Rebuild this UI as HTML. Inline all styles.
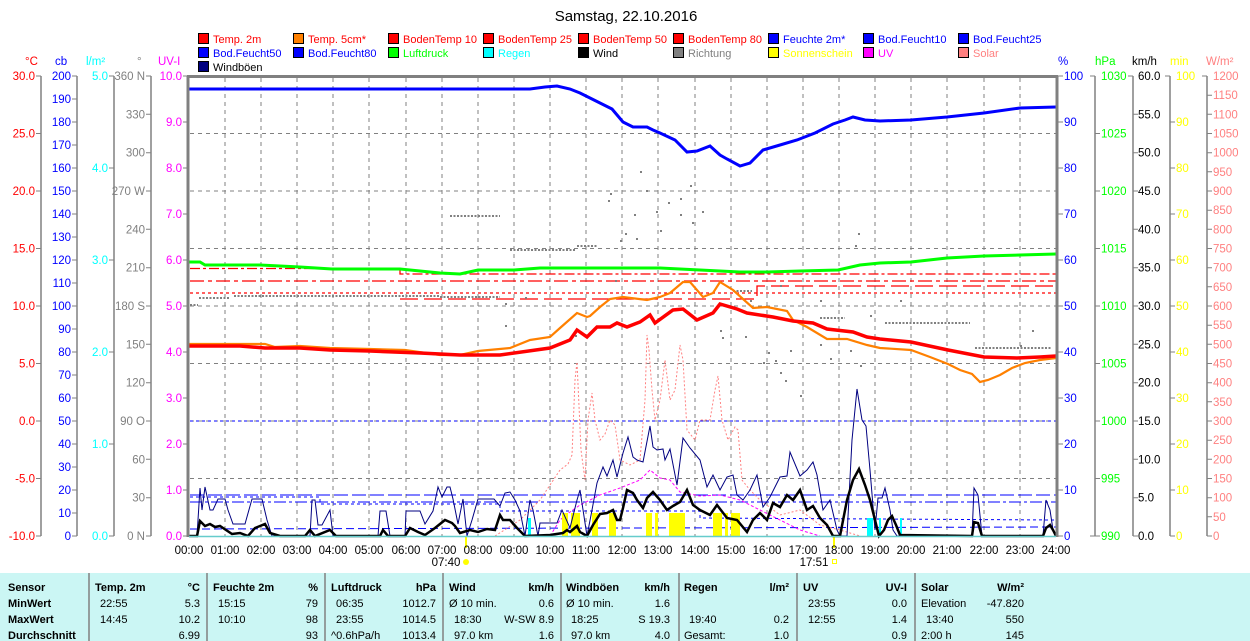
<!DOCTYPE html>
<html><head><meta charset="utf-8"><style>
html,body{margin:0;padding:0;background:#fff;}
body{width:1250px;height:641px;overflow:hidden;position:relative;font-family:"Liberation Sans",sans-serif;}
svg{position:absolute;left:0;top:0;}
</style></head><body>
<svg width="1250" height="641" xmlns="http://www.w3.org/2000/svg" font-family="Liberation Sans, sans-serif" font-size="11.5">
<text x="626" y="21" text-anchor="middle" font-size="15">Samstag, 22.10.2016</text>
<!-- legend -->
<g font-size="11">
<g stroke="#000" stroke-width="1">
<rect x="198.5" y="33.5" width="10" height="10" fill="#f00"/><rect x="293.5" y="33.5" width="10" height="10" fill="#ff8000"/><rect x="388.5" y="33.5" width="10" height="10" fill="#f00"/><rect x="483.5" y="33.5" width="10" height="10" fill="#f00"/><rect x="578.5" y="33.5" width="10" height="10" fill="#f00"/><rect x="673.5" y="33.5" width="10" height="10" fill="#f00"/><rect x="768.5" y="33.5" width="10" height="10" fill="#00f"/><rect x="863.5" y="33.5" width="10" height="10" fill="#00f"/><rect x="958.5" y="33.5" width="10" height="10" fill="#00f"/>
<rect x="198.5" y="47.5" width="10" height="10" fill="#00f"/><rect x="293.5" y="47.5" width="10" height="10" fill="#00f"/><rect x="388.5" y="47.5" width="10" height="10" fill="#0f0"/><rect x="483.5" y="47.5" width="10" height="10" fill="#0ff"/><rect x="578.5" y="47.5" width="10" height="10" fill="#000"/><rect x="673.5" y="47.5" width="10" height="10" fill="#808080"/><rect x="768.5" y="47.5" width="10" height="10" fill="#ff0"/><rect x="863.5" y="47.5" width="10" height="10" fill="#f0f"/><rect x="958.5" y="47.5" width="10" height="10" fill="#ff8080"/>
<rect x="198.5" y="61.5" width="10" height="10" fill="#000080"/>
</g>
<text x="213" y="43" fill="#f00">Temp. 2m</text><text x="308" y="43" fill="#f00">Temp. 5cm*</text><text x="403" y="43" fill="#f00">BodenTemp 10</text><text x="498" y="43" fill="#f00">BodenTemp 25</text><text x="593" y="43" fill="#f00">BodenTemp 50</text><text x="688" y="43" fill="#f00">BodenTemp 80</text><text x="783" y="43" fill="#00f">Feuchte 2m*</text><text x="878" y="43" fill="#00f">Bod.Feucht10</text><text x="973" y="43" fill="#00f">Bod.Feucht25</text>
<text x="213" y="57" fill="#00f">Bod.Feucht50</text><text x="308" y="57" fill="#00f">Bod.Feucht80</text><text x="403" y="57" fill="#0f0">Luftdruck</text><text x="498" y="57" fill="#0ff">Regen</text><text x="593" y="57" fill="#000">Wind</text><text x="688" y="57" fill="#808080">Richtung</text><text x="783" y="57" fill="#ff0">Sonnenschein</text><text x="878" y="57" fill="#f0f">UV</text><text x="973" y="57" fill="#ff8080">Solar</text>
<text x="213" y="71" fill="#000">Windböen</text>
</g>
<!-- axis headers -->
<text x="25" y="65" fill="#f00">°C</text><text x="55" y="65" fill="#00f">cb</text><text x="86" y="65" fill="#0ff">l/m²</text><text x="137" y="65" fill="#808080">°</text><text x="158" y="65" fill="#f0f">UV-I</text>
<text x="1058" y="65" fill="#00f">%</text><text x="1095" y="65" fill="#0f0">hPa</text><text x="1132" y="65" fill="#000">km/h</text><text x="1170" y="65" fill="#ff0">min</text><text x="1206" y="65" fill="#ff8080">W/m²</text>
<!-- axis lines -->
<g stroke="#808080" stroke-width="1.5">
<line x1="41" y1="76" x2="41" y2="536"/><line x1="77" y1="76" x2="77" y2="536"/><line x1="114" y1="76" x2="114" y2="536"/><line x1="151" y1="76" x2="151" y2="536"/>
<line x1="1095" y1="76" x2="1095" y2="536"/><line x1="1133" y1="76" x2="1133" y2="536"/><line x1="1170" y1="76" x2="1170" y2="536"/><line x1="1207" y1="76" x2="1207" y2="536"/>
</g>
<!-- grid -->
<g stroke="#808080" stroke-width="1" stroke-dasharray="4,4">
<line x1="225" y1="78" x2="225" y2="536"/><line x1="261" y1="78" x2="261" y2="536"/><line x1="297" y1="78" x2="297" y2="536"/><line x1="333" y1="78" x2="333" y2="536"/><line x1="369" y1="78" x2="369" y2="536"/><line x1="406" y1="78" x2="406" y2="536"/><line x1="442" y1="78" x2="442" y2="536"/><line x1="478" y1="78" x2="478" y2="536"/><line x1="514" y1="78" x2="514" y2="536"/><line x1="550" y1="78" x2="550" y2="536"/><line x1="586" y1="78" x2="586" y2="536"/><line x1="622" y1="78" x2="622" y2="536"/><line x1="658" y1="78" x2="658" y2="536"/><line x1="695" y1="78" x2="695" y2="536"/><line x1="731" y1="78" x2="731" y2="536"/><line x1="767" y1="78" x2="767" y2="536"/><line x1="803" y1="78" x2="803" y2="536"/><line x1="839" y1="78" x2="839" y2="536"/><line x1="875" y1="78" x2="875" y2="536"/><line x1="911" y1="78" x2="911" y2="536"/><line x1="947" y1="78" x2="947" y2="536"/><line x1="984" y1="78" x2="984" y2="536"/><line x1="1020" y1="78" x2="1020" y2="536"/>
<line x1="190" y1="133.5" x2="1056" y2="133.5"/><line x1="190" y1="191" x2="1056" y2="191"/><line x1="190" y1="248.5" x2="1056" y2="248.5"/><line x1="190" y1="306" x2="1056" y2="306"/><line x1="190" y1="363.5" x2="1056" y2="363.5"/><line x1="190" y1="421" x2="1056" y2="421"/><line x1="190" y1="478.5" x2="1056" y2="478.5"/>
</g>
<!-- ticks -->
<g stroke="#808080" stroke-width="1">
<path d="M36 76h5M36 133.5h5M36 191h5M36 248.5h5M36 306h5M36 363.5h5M36 421h5M36 478.5h5M36 536h5"/>
<path d="M72 76h5M72 99h5M72 122h5M72 145h5M72 168h5M72 191h5M72 214h5M72 237h5M72 260h5M72 283h5M72 306h5M72 329h5M72 352h5M72 375h5M72 398h5M72 421h5M72 444h5M72 467h5M72 490h5M72 513h5M72 536h5"/>
<path d="M109 76h5M109 168h5M109 260h5M109 352h5M109 444h5M109 536h5"/>
<path d="M146 76h5M146 114.3h5M146 152.7h5M146 191h5M146 229.3h5M146 267.7h5M146 306h5M146 344.3h5M146 382.7h5M146 421h5M146 459.3h5M146 497.7h5M146 536h5"/>
<path d="M183 76h5M183 122h5M183 168h5M183 214h5M183 260h5M183 306h5M183 352h5M183 398h5M183 444h5M183 490h5M183 536h5"/>
<path d="M1058 76h5M1058 122h5M1058 168h5M1058 214h5M1058 260h5M1058 306h5M1058 352h5M1058 398h5M1058 444h5M1058 490h5M1058 536h5"/>
<path d="M1090 76h5M1095 133.5h5M1095 191h5M1095 248.5h5M1095 306h5M1095 363.5h5M1095 421h5M1095 478.5h5M1095 536h5M1090 536h5"/>
<path d="M1128 76h5M1133 114.3h5M1133 152.7h5M1133 191h5M1133 229.3h5M1133 267.7h5M1133 306h5M1133 344.3h5M1133 382.7h5M1133 421h5M1133 459.3h5M1133 497.7h5M1133 536h5"/>
<path d="M1165 76h5M1170 122h5M1170 168h5M1170 214h5M1170 260h5M1170 306h5M1170 352h5M1170 398h5M1170 444h5M1170 490h5M1170 536h5"/>
<path d="M1202 76h5M1207 95.2h5M1207 114.3h5M1207 133.5h5M1207 152.7h5M1207 171.8h5M1207 191h5M1207 210.2h5M1207 229.3h5M1207 248.5h5M1207 267.7h5M1207 286.8h5M1207 306h5M1207 325.2h5M1207 344.3h5M1207 363.5h5M1207 382.7h5M1207 401.8h5M1207 421h5M1207 440.2h5M1207 459.3h5M1207 478.5h5M1207 497.7h5M1207 516.8h5M1207 536h5"/>
</g>
<!-- left labels -->
<g text-anchor="end" fill="#f00"><text x="35" y="80">30.0</text><text x="35" y="137.5">25.0</text><text x="35" y="195">20.0</text><text x="35" y="252.5">15.0</text><text x="35" y="310">10.0</text><text x="35" y="367.5">5.0</text><text x="35" y="425">0.0</text><text x="35" y="482.5">-5.0</text><text x="35" y="540">-10.0</text></g>
<g text-anchor="end" fill="#00f"><text x="71" y="80">200</text><text x="71" y="103">190</text><text x="71" y="126">180</text><text x="71" y="149">170</text><text x="71" y="172">160</text><text x="71" y="195">150</text><text x="71" y="218">140</text><text x="71" y="241">130</text><text x="71" y="264">120</text><text x="71" y="287">110</text><text x="71" y="310">100</text><text x="71" y="333">90</text><text x="71" y="356">80</text><text x="71" y="379">70</text><text x="71" y="402">60</text><text x="71" y="425">50</text><text x="71" y="448">40</text><text x="71" y="471">30</text><text x="71" y="494">20</text><text x="71" y="517">10</text><text x="71" y="540">0</text></g>
<g text-anchor="end" fill="#0ff"><text x="108" y="80">5.0</text><text x="108" y="172">4.0</text><text x="108" y="264">3.0</text><text x="108" y="356">2.0</text><text x="108" y="448">1.0</text><text x="108" y="540">0.0</text></g>
<g text-anchor="end" fill="#808080"><text x="145" y="80">360 N</text><text x="145" y="118.3">330</text><text x="145" y="156.7">300</text><text x="145" y="195">270 W</text><text x="145" y="233.3">240</text><text x="145" y="271.7">210</text><text x="145" y="310">180 S</text><text x="145" y="348.3">150</text><text x="145" y="386.7">120</text><text x="145" y="425">90  O</text><text x="145" y="463.3">60</text><text x="145" y="501.7">30</text><text x="145" y="540">0  N</text></g>
<g text-anchor="end" fill="#f0f"><text x="182" y="80">10.0</text><text x="182" y="126">9.0</text><text x="182" y="172">8.0</text><text x="182" y="218">7.0</text><text x="182" y="264">6.0</text><text x="182" y="310">5.0</text><text x="182" y="356">4.0</text><text x="182" y="402">3.0</text><text x="182" y="448">2.0</text><text x="182" y="494">1.0</text><text x="182" y="540">0.0</text></g>
<!-- right labels -->
<g fill="#00f"><text x="1064" y="80">100</text><text x="1064" y="126">90</text><text x="1064" y="172">80</text><text x="1064" y="218">70</text><text x="1064" y="264">60</text><text x="1064" y="310">50</text><text x="1064" y="356">40</text><text x="1064" y="402">30</text><text x="1064" y="448">20</text><text x="1064" y="494">10</text><text x="1064" y="540">0</text></g>
<g fill="#0f0"><text x="1101" y="80">1030</text><text x="1101" y="137.5">1025</text><text x="1101" y="195">1020</text><text x="1101" y="252.5">1015</text><text x="1101" y="310">1010</text><text x="1101" y="367.5">1005</text><text x="1101" y="425">1000</text><text x="1101" y="482.5">995</text><text x="1101" y="540">990</text></g>
<g fill="#000"><text x="1138" y="80">60.0</text><text x="1138" y="118.3">55.0</text><text x="1138" y="156.7">50.0</text><text x="1138" y="195">45.0</text><text x="1138" y="233.3">40.0</text><text x="1138" y="271.7">35.0</text><text x="1138" y="310">30.0</text><text x="1138" y="348.3">25.0</text><text x="1138" y="386.7">20.0</text><text x="1138" y="425">15.0</text><text x="1138" y="463.3">10.0</text><text x="1138" y="501.7">5.0</text><text x="1138" y="540">0.0</text></g>
<g fill="#ff0"><text x="1176" y="80">100</text><text x="1176" y="126">90</text><text x="1176" y="172">80</text><text x="1176" y="218">70</text><text x="1176" y="264">60</text><text x="1176" y="310">50</text><text x="1176" y="356">40</text><text x="1176" y="402">30</text><text x="1176" y="448">20</text><text x="1176" y="494">10</text><text x="1176" y="540">0</text></g>
<g fill="#ff8080"><text x="1213" y="80">1200</text><text x="1213" y="99.2">1150</text><text x="1213" y="118.3">1100</text><text x="1213" y="137.5">1050</text><text x="1213" y="156.7">1000</text><text x="1213" y="175.8">950</text><text x="1213" y="195">900</text><text x="1213" y="214.2">850</text><text x="1213" y="233.3">800</text><text x="1213" y="252.5">750</text><text x="1213" y="271.7">700</text><text x="1213" y="290.8">650</text><text x="1213" y="310">600</text><text x="1213" y="329.2">550</text><text x="1213" y="348.3">500</text><text x="1213" y="367.5">450</text><text x="1213" y="386.7">400</text><text x="1213" y="405.8">350</text><text x="1213" y="425">300</text><text x="1213" y="444.2">250</text><text x="1213" y="463.3">200</text><text x="1213" y="482.5">150</text><text x="1213" y="501.7">100</text><text x="1213" y="520.8">50</text><text x="1213" y="540">0</text></g>

<g stroke="#00f" stroke-width="1" fill="none">
<line x1="190" y1="421" x2="1056" y2="421" stroke-dasharray="3,3"/>
<line x1="190" y1="495" x2="1056" y2="495" stroke-dasharray="14,4"/>
<line x1="190" y1="502" x2="1056" y2="502" stroke-dasharray="12,3,3,3"/>
<polyline points="190,497 320,497 320,504 500,504 500,511 700,511 700,518 1056,520" stroke-dasharray="3,3"/>
<line x1="190" y1="529" x2="1056" y2="527" stroke-dasharray="8,4"/>
</g>
<g stroke="#f00" stroke-width="1.3" fill="none">
<polyline points="190,268.5 400,268.5 400,274 1056,274" stroke-dasharray="10,3,3,3"/>
<line x1="190" y1="281" x2="1056" y2="281" stroke-dasharray="14,4,4,4"/>
<line x1="190" y1="293" x2="1056" y2="293" stroke-dasharray="3,3"/>
<polyline points="400,299 757,299 757,286 1056,286" stroke-dasharray="18,6"/>
</g>
<g stroke="#808080" stroke-width="2" stroke-dasharray="2,1.5" fill="none">
<line x1="190" y1="305" x2="198" y2="305"/><line x1="199" y1="298" x2="230" y2="298"/><line x1="234" y1="296" x2="440" y2="296"/><line x1="440" y1="297" x2="500" y2="297"/>
<line x1="450" y1="216" x2="500" y2="216"/><line x1="510" y1="250" x2="575" y2="250"/><line x1="577" y1="246" x2="598" y2="246"/>
<line x1="733" y1="291" x2="752" y2="291"/><line x1="820" y1="318" x2="845" y2="318"/><line x1="885" y1="323" x2="970" y2="323"/><line x1="975" y1="348" x2="1052" y2="348"/>
</g>
<g fill="#808080">
<rect x="640" y="171" width="2" height="2"/><rect x="610" y="193" width="2" height="2"/><rect x="646" y="190" width="2" height="2"/><rect x="690" y="185" width="2" height="2"/><rect x="608" y="200" width="2" height="2"/><rect x="656" y="211" width="2" height="2"/><rect x="668" y="202" width="2" height="2"/><rect x="680" y="198" width="2" height="2"/><rect x="702" y="211" width="2" height="2"/><rect x="660" y="230" width="2" height="2"/><rect x="634" y="214" width="2" height="2"/><rect x="620" y="240" width="2" height="2"/><rect x="636" y="238" width="2" height="2"/><rect x="692" y="222" width="2" height="2"/><rect x="680" y="214" width="2" height="2"/><rect x="625" y="233" width="2" height="2"/><rect x="615" y="280" width="2" height="2"/><rect x="505" y="303" width="2" height="2"/><rect x="525" y="297" width="2" height="2"/><rect x="575" y="335" width="2" height="2"/><rect x="720" y="330" width="2" height="2"/><rect x="722" y="337" width="2" height="2"/><rect x="745" y="336" width="2" height="2"/><rect x="775" y="360" width="2" height="2"/><rect x="785" y="380" width="2" height="2"/><rect x="763" y="362" width="2" height="2"/><rect x="768" y="352" width="2" height="2"/><rect x="800" y="395" width="2" height="2"/><rect x="820" y="344" width="2" height="2"/><rect x="830" y="358" width="2" height="2"/><rect x="850" y="350" width="2" height="2"/><rect x="858" y="233" width="2" height="2"/><rect x="855" y="245" width="2" height="2"/><rect x="790" y="350" width="2" height="2"/><rect x="780" y="372" width="2" height="2"/><rect x="505" y="325" width="2" height="2"/><rect x="860" y="365" width="2" height="2"/><rect x="870" y="315" width="2" height="2"/><rect x="900" y="300" width="2" height="2"/><rect x="1020" y="345" width="2" height="2"/><rect x="1032" y="330" width="2" height="2"/><rect x="750" y="300" width="2" height="2"/><rect x="780" y="285" width="2" height="2"/><rect x="820" y="300" width="2" height="2"/></g>

<polyline fill="none" stroke="#ff8080" stroke-width="1" stroke-dasharray="2,2" points="495,536 520,520 540,500 560,470 568,464 572,455 575,380 577,362 581,450 585,480 588,420 592,393 595,420 600,440 605,434 610,420 615,425 620,460 630,465 640,460 645,400 647,335 649,350 652,390 655,420 660,400 665,360 670,400 675,390 680,345 683,360 687,430 695,440 700,420 710,420 715,390 718,376 722,420 728,440 735,427 738,430 742,480 750,490 760,500 780,515 800,510 820,525 840,530 860,536"/>
<polyline fill="none" stroke="#f0f" stroke-width="1" stroke-dasharray="3,2" points="550,536 560,520 570,512 580,505 600,495 620,488 640,480 650,470 660,478 670,480 680,492 700,496 720,495 740,500 760,510 780,520 800,530 820,536"/>
<g fill="#ff0">
<rect x="562" y="513" width="6" height="23"/><rect x="571" y="513" width="9" height="23"/><rect x="592" y="513" width="6" height="23"/><rect x="609" y="513" width="7" height="23"/><rect x="646" y="513" width="6" height="23"/><rect x="655" y="513" width="3" height="23"/><rect x="669" y="513" width="16" height="23"/><rect x="713" y="513" width="9" height="23"/><rect x="725" y="513" width="3" height="23"/><rect x="731" y="513" width="9" height="23"/>
<rect x="465" y="536" width="2" height="12"/><rect x="833" y="536" width="2" height="12"/>
</g>
<g fill="#0ff"><rect x="528" y="518" width="3" height="18"/><rect x="867" y="518" width="6" height="18"/><rect x="879" y="518" width="2" height="18"/><rect x="900" y="518" width="2" height="18"/></g>
<polyline fill="none" stroke="#000080" stroke-width="1" points="189,536 197,536 200,488 202,510 205,487 210,510 213,510 218,499 225,499 228,510 233,524 245,524 252,499 262,499 267,520 272,536 310,536 312,500 315,500 318,525 322,525 330,510 333,536 378,536 380,511 386,511 390,536 405,536 406,511 420,511 425,524 433,511 438,487 442,497 447,487 450,487 453,499 458,524 463,499 467,536 472,520 478,499 494,499 500,506 505,493 510,492 515,500 520,511 525,536 530,500 533,510 538,536 540,523 557,523 562,510 570,528 577,500 580,490 587,536 592,510 597,483 603,467 607,476 613,460 617,477 623,453 628,437 633,457 637,460 643,462 650,426 653,447 657,450 663,449 665,460 670,449 677,485 683,438 690,448 700,460 707,487 713,475 720,490 727,477 733,475 737,495 743,500 750,490 757,475 763,507 770,497 780,477 787,476 790,452 800,476 807,470 813,462 817,475 823,510 830,500 837,530 840,536 847,536 852,440 857,389 862,420 866,426 870,470 875,530 878,498 882,498 885,488 890,510 893,530 897,536 972,536 974,488 978,495 982,536 1043,536 1046,500 1050,510 1053,530 1056,536"/>
<polyline fill="none" stroke="#000" stroke-width="2.5" points="189,536 197,536 200,521 205,526 210,524 215,527 220,526 226,530 232,534 240,533 248,536 255,528 260,526 265,524 270,533 280,536 305,536 310,530 315,536 330,530 336,536 380,536 383,530 388,536 405,536 410,528 418,532 425,535 435,528 445,520 452,523 455,526 460,533 470,530 478,532 487,529 495,530 500,515 503,520 510,520 517,528 525,536 550,535 563,533 567,530 570,532 577,526 580,532 587,536 593,525 600,514 607,513 613,510 617,520 620,520 623,508 627,490 633,493 637,500 643,508 647,498 653,492 660,500 667,510 673,506 680,502 687,490 693,505 700,510 710,515 717,505 727,518 737,520 747,532 753,520 760,513 767,520 773,503 780,507 787,495 793,500 800,490 807,510 813,506 820,518 827,525 833,536 840,536 847,500 853,480 859,469 865,485 870,500 875,520 879,536 884,530 888,520 892,516 896,525 900,535 972,536 974,522 978,523 982,536 1043,536 1046,528 1050,525 1053,530 1056,536"/>
<polyline fill="none" stroke="#0f0" stroke-width="3" points="189,262 200,262 205,265 260,265 300,267 332,269 400,269 420,271 440,273 460,274 478,270 514,270 540,268 580,268 660,268 700,270 740,272 767,272 800,271 838,270 860,265 880,263 911,262 947,258 984,256 1020,255 1056,254"/>
<polyline fill="none" stroke="#00f" stroke-width="3" points="189,89 480,89 530,89 545,87 557,86 570,89 580,93 590,98 600,103 612,109 623,122 633,127 647,127 653,130 660,133 675,140 687,152 697,151 710,146 720,155 727,159 740,166 750,163 763,150 780,145 797,140 815,133 833,124 845,120 853,117 865,120 880,121 911,120 947,117 984,113 1020,108 1056,107"/>
<polyline fill="none" stroke="#ff8000" stroke-width="2.2" points="189,344 265,344 275,347 300,346 330,348 370,349 405,350 440,355 460,355 478,351 510,348 530,340 550,337 560,328 577,313 587,317 590,316 600,307 610,299 623,297 647,300 660,297 670,293 683,282 690,282 703,297 713,293 720,282 733,290 753,308 767,307 787,311 793,320 807,327 827,339 847,339 867,345 880,348 911,350 930,357 948,364 960,370 972,374 980,382 988,380 1000,375 1012,368 1025,363 1040,360 1056,358"/>
<polyline fill="none" stroke="#f00" stroke-width="3.5" points="189,346 240,346 265,348 300,348 330,350 370,351 420,353 460,355 500,355 550,348 560,344 570,340 577,330 587,337 597,327 610,327 617,323 627,327 640,322 650,315 655,323 673,310 683,309 697,320 713,313 720,304 737,309 747,313 773,317 793,321 813,323 827,329 853,332 867,337 880,339 911,342 948,350 984,357 1017,358 1040,357 1056,356"/>
<g stroke="#808080" stroke-width="3" fill="none"><line x1="188" y1="76" x2="188" y2="537"/><line x1="187" y1="76.5" x2="1058" y2="76.5"/><line x1="1057" y1="76" x2="1057" y2="537"/></g>
<line x1="189" y1="536.5" x2="1056" y2="536.5" stroke="#6cc" stroke-width="1.5"/>
<g text-anchor="middle" font-size="11.5" fill="#000">
<text x="189" y="554">00:00</text><text x="225" y="554">01:00</text><text x="261" y="554">02:00</text><text x="297" y="554">03:00</text><text x="333" y="554">04:00</text><text x="369" y="554">05:00</text><text x="406" y="554">06:00</text><text x="442" y="554">07:00</text><text x="478" y="554">08:00</text><text x="514" y="554">09:00</text><text x="550" y="554">10:00</text><text x="586" y="554">11:00</text><text x="622" y="554">12:00</text><text x="658" y="554">13:00</text><text x="695" y="554">14:00</text><text x="731" y="554">15:00</text><text x="767" y="554">16:00</text><text x="803" y="554">17:00</text><text x="839" y="554">18:00</text><text x="875" y="554">19:00</text><text x="911" y="554">20:00</text><text x="947" y="554">21:00</text><text x="984" y="554">22:00</text><text x="1020" y="554">23:00</text><text x="1056" y="554">24:00</text>
<text x="446" y="566">07:40</text><text x="814" y="566">17:51</text></g>
<circle cx="466" cy="562" r="3" fill="#ff0"/><rect x="832.5" y="559.5" width="4" height="4" fill="none" stroke="#ff0"/>
<rect x="0" y="573" width="1250" height="68" fill="#cbf6f4"/>
<g stroke="#808080" stroke-width="1.5"><line x1="89" y1="573" x2="89" y2="641"/><line x1="207" y1="573" x2="207" y2="641"/><line x1="325" y1="573" x2="325" y2="641"/><line x1="443" y1="573" x2="443" y2="641"/><line x1="561" y1="573" x2="561" y2="641"/><line x1="679" y1="573" x2="679" y2="641"/><line x1="797" y1="573" x2="797" y2="641"/><line x1="915" y1="573" x2="915" y2="641"/></g>
<g font-size="11" fill="#000">
<g font-weight="bold"><text x="8" y="591">Sensor</text><text x="8" y="607">MinWert</text><text x="8" y="623">MaxWert</text><text x="8" y="639">Durchschnitt</text>
<text x="95" y="591">Temp. 2m</text><text x="213" y="591">Feuchte 2m</text><text x="331" y="591">Luftdruck</text><text x="449" y="591">Wind</text><text x="566" y="591">Windböen</text><text x="684" y="591">Regen</text><text x="803" y="591">UV</text><text x="921" y="591">Solar</text>
<g text-anchor="end"><text x="200" y="591">°C</text><text x="318" y="591">%</text><text x="436" y="591">hPa</text><text x="554" y="591">km/h</text><text x="670" y="591">km/h</text><text x="789" y="591">l/m²</text><text x="907" y="591">UV-I</text><text x="1024" y="591">W/m²</text></g></g>
<text x="100" y="607">22:55</text><text x="100" y="623">14:45</text>
<text x="218" y="607">15:15</text><text x="218" y="623">10:10</text>
<text x="336" y="607">06:35</text><text x="336" y="623">23:55</text><text x="331" y="639">^0.6hPa/h</text>
<text x="449" y="607">Ø 10 min.</text><text x="454" y="623">18:30</text><text x="454" y="639">97.0 km</text>
<text x="566" y="607">Ø 10 min.</text><text x="571" y="623">18:25</text><text x="571" y="639">97.0 km</text>
<text x="689" y="623">19:40</text><text x="684" y="639">Gesamt:</text>
<text x="808" y="607">23:55</text><text x="808" y="623">12:55</text>
<text x="921" y="607">Elevation</text><text x="926" y="623">13:40</text><text x="921" y="639">2:00 h</text>
<g text-anchor="end">
<text x="200" y="607">5.3</text><text x="200" y="623">10.2</text><text x="200" y="639">6.99</text>
<text x="318" y="607">79</text><text x="318" y="623">98</text><text x="318" y="639">93</text>
<text x="436" y="607">1012.7</text><text x="436" y="623">1014.5</text><text x="436" y="639">1013.4</text>
<text x="554" y="607">0.6</text><text x="554" y="623">W-SW 8.9</text><text x="554" y="639">1.6</text>
<text x="670" y="607">1.6</text><text x="670" y="623">S 19.3</text><text x="670" y="639">4.0</text>
<text x="789" y="623">0.2</text><text x="789" y="639">1.0</text>
<text x="907" y="607">0.0</text><text x="907" y="623">1.4</text><text x="907" y="639">0.9</text>
<text x="1024" y="607">-47.820</text><text x="1024" y="623">550</text><text x="1024" y="639">145</text>
</g></g>
</svg>
</body></html>
